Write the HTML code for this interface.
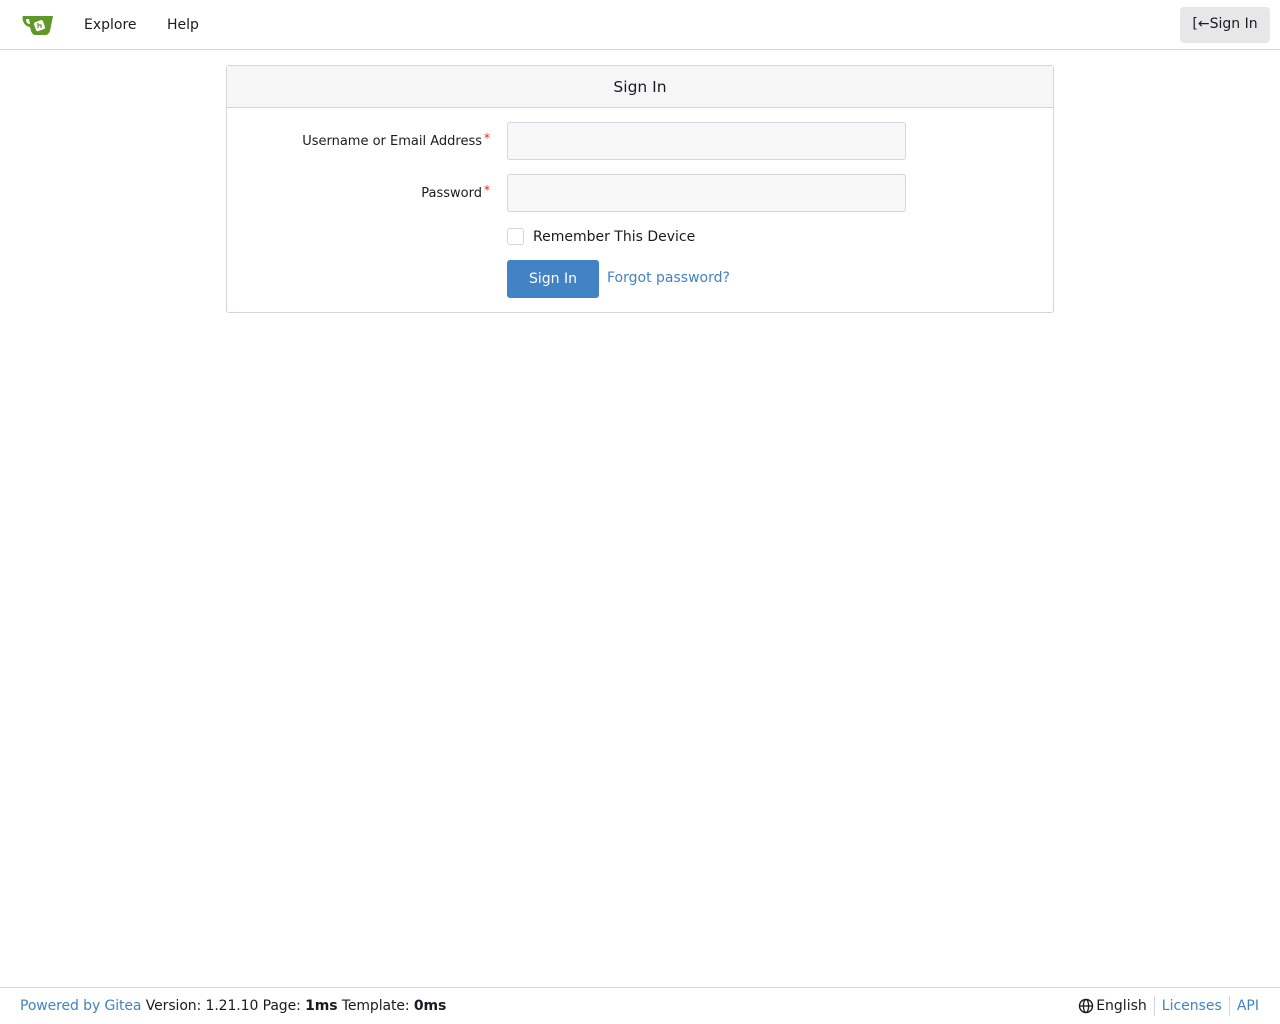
<!DOCTYPE html>
<html><head><meta charset="utf-8"><style>
*{box-sizing:border-box}
body{margin:0;width:1280px;height:1024px;background:#fff;font-family:"DejaVu Sans","Liberation Sans",sans-serif;font-size:14px;color:#181c21;position:relative}
.nav{height:50px;border-bottom:1px solid #d0d7de;position:relative}
.nav a{position:absolute;top:17px;color:#181c21;text-decoration:none;font-size:14px}
.signbtn{position:absolute;left:1180px;top:7px;width:90px;height:36px;background:#e7e7e7;border-radius:4px;font-size:14px;line-height:35px;text-align:center}
.box{position:absolute;left:226px;top:65px;width:828px;height:248px;border:1px solid #d0d7de;border-radius:3px}
.hd{height:42px;background:#f6f6f6;border-bottom:1px solid #d0d7de;text-align:center;line-height:42px;font-size:15.5px}
.lbl{position:absolute;right:571px;font-size:13px}
.lbl:after{content:"*";color:#db2828;position:absolute;right:-8px;top:-3px;font-size:12px}
.inp{position:absolute;left:280px;width:399px;height:38px;background:#f8f8f8;border:1px solid #d0d7de;border-radius:3px}
.foot{position:absolute;left:0;top:987px;width:1280px;height:37px;border-top:1px solid #d0d7de;background:#fff;font-size:14px}
.blue{color:#4183c4}
</style></head><body>
<div class="nav">
<svg style="position:absolute;left:22px;top:13px" width="32" height="24" viewBox="0 0 32 24"><path d="M1 3 C0 3 0 13 8 14 L9 18 C10 20 11 22 13 22 L24 22 C26 22 27 20 28 18 L31 3 Z" fill="#609926"/><path d="M4 6 C4 10 6 11 8 11 L7 6Z" fill="#fff"/><rect x="12.5" y="8" width="9.5" height="9.5" rx="2" transform="rotate(-20 17 12)" fill="#fff"/><path d="M16 10v5M16 12h3v3" stroke="#609926" stroke-width="1.2" fill="none"/></svg>
<a style="left:84px">Explore</a><a style="left:167px">Help</a>
<div class="signbtn">[←Sign In</div>
</div>
<div class="box">
<div class="hd">Sign In</div>
<div class="lbl" style="top:68px">Username or Email Address</div>
<div class="inp" style="top:56px"></div>
<div class="lbl" style="top:120px">Password</div>
<div class="inp" style="top:108px"></div>
<div style="position:absolute;left:280px;top:162px;width:17px;height:17px;border:1px solid #d0d7de;border-radius:3px"></div>
<div style="position:absolute;left:306px;top:163px">Remember This Device</div>
<div style="position:absolute;left:280px;top:194px;width:92px;height:38px;background:#4183c4;color:#fff;border-radius:3px;line-height:38px;text-align:center">Sign In</div>
<div class="blue" style="position:absolute;left:380px;top:204px">Forgot password?</div>
</div>
<div class="foot">
<div style="position:absolute;left:20px;top:10px;letter-spacing:-0.1px"><span class="blue">Powered by Gitea</span> Version: 1.21.10 Page: <b>1ms</b> Template: <b>0ms</b></div>
<div style="position:absolute;right:21px;top:8px;display:flex;align-items:center"><svg width="16" height="16" viewBox="0 0 16 16" style="margin-right:2px"><circle cx="8" cy="8" r="6.5" fill="none" stroke="#181c21" stroke-width="1.4"/><ellipse cx="8" cy="8" rx="2.6" ry="6.5" fill="none" stroke="#181c21" stroke-width="1.3"/><path d="M1.5 8h13" stroke="#181c21" stroke-width="1.3"/></svg>English<span style="display:inline-block;width:1px;height:20px;background:#d0d7de;margin:0 7px"></span><span class="blue">Licenses</span><span style="display:inline-block;width:1px;height:20px;background:#d0d7de;margin:0 7px"></span><span class="blue">API</span></div>
</div>
</body></html>
